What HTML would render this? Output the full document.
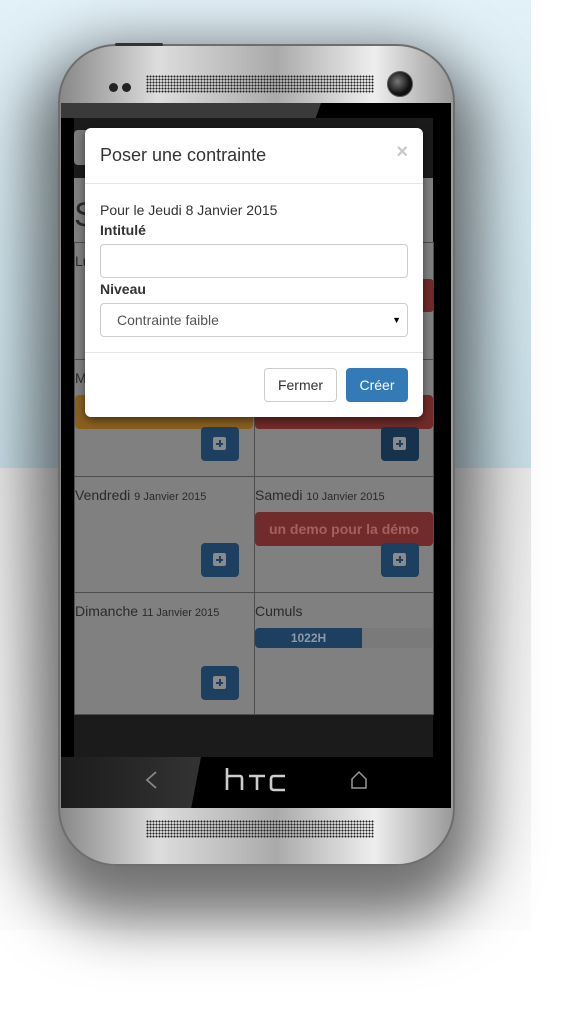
<!DOCTYPE html>
<html><head><meta charset="utf-8"><style>
*{box-sizing:border-box;margin:0;padding:0}
body{width:565px;height:1010px;background:#fff;position:relative;overflow:hidden;font-family:"Liberation Sans",sans-serif}
.a{position:absolute}
.bgtop{left:0;top:0;width:531px;height:468px;background:linear-gradient(180deg,#e2f0f7 0%,#d3e6ee 50%,#c8dfe8 100%)}
.bgbot{left:0;top:468px;width:531px;height:462px;background:linear-gradient(180deg,#e9e9e9,#f6f6f6 70%,#fcfcfc)}
.shadow{left:58px;top:44px;width:397px;height:822px;border-radius:60px;box-shadow:0 30px 60px 25px rgba(0,0,0,.55)}
.body{left:58px;top:44px;width:397px;height:822px;border-radius:58px;background:linear-gradient(90deg,#888,#ddd 25%,#aaa 55%,#eee 80%,#999);border:2px solid #6e6e6e}
.inner{left:61px;top:103px;width:390px;height:705px;background:#000}
.grille{background-image:radial-gradient(circle,#222 0.9px,transparent 1.1px);background-size:3px 3px}
.cell{position:absolute;background:#808080;border:1px solid #4e4e4e}
.t{font-size:14px;color:#2a2a2a;position:absolute;left:0;top:10px;white-space:nowrap}
.t small{font-size:11px}
.pb{position:absolute;width:38px;height:34px;background:#1d3f60;border-radius:4px}
.pb:after{content:"";position:absolute;left:12px;top:10px;width:13px;height:13px;border-radius:2px;
background:linear-gradient(#1d3f60,#1d3f60) center/7px 2px no-repeat,linear-gradient(#1d3f60,#1d3f60) center/2px 7px no-repeat,#8a8a8a}
.modal{left:85px;top:128px;width:338px;height:289px;background:#fff;border-radius:6px;box-shadow:0 3px 9px rgba(0,0,0,.5)}
.inp{position:absolute;left:15px;width:308px;height:34px;border:1px solid #ccc;border-radius:4px;background:#fff}
</style></head><body>
<div class="a bgtop"></div><div class="a bgbot"></div>
<div class="a shadow"></div>
<div class="a body"></div>
<div class="a" style="left:115px;top:43px;width:48px;height:3px;background:#333;border-radius:2px"></div>
<div class="a" style="left:109px;top:83px;width:9px;height:9px;border-radius:50%;background:#222"></div>
<div class="a" style="left:122px;top:83px;width:9px;height:9px;border-radius:50%;background:#222"></div>
<div class="a grille" style="left:146px;top:75px;width:228px;height:18px"></div>
<div class="a" style="left:387px;top:71px;width:26px;height:26px;border-radius:50%;background:radial-gradient(circle at 40% 40%,#777,#111 60%);border:1px solid #555"></div>
<div class="a grille" style="left:146px;top:820px;width:228px;height:18px"></div>
<div class="a inner"></div>
<div class="a" style="left:61px;top:103px;width:260px;height:15px;background:#3a3a3a;clip-path:polygon(0 0,100% 0,98% 100%,0 100%)"></div>
<div class="a" style="left:61px;top:757px;width:140px;height:51px;background:linear-gradient(90deg,#1c1c1c,#333);clip-path:polygon(0 0,100% 0,93% 100%,0 100%)"></div>
<svg class="a" style="left:140px;top:768px" width="24" height="24"><path d="M16 4 L7 12 L16 20" stroke="#888" stroke-width="1.8" fill="none"/></svg>
<svg class="a" style="left:222px;top:766px" width="68" height="28"><g stroke="#ccc" stroke-width="2.6" fill="none"><path d="M5 2 V24 M5 12 Q5 10 8 10 H18 Q20 10 20 13 V24"/><path d="M27 10 H43 M35 10 V24"/><path d="M63 10 H52 Q49 10 49 13 V21 Q49 24 52 24 H63"/></g></svg>
<svg class="a" style="left:349px;top:769px" width="20" height="22"><path d="M3 19 V10 L10 3 L17 10 V19 Z" stroke="#999" stroke-width="1.5" fill="none"/></svg>
<!-- screen -->
<div class="a" style="left:74px;top:118px;width:359px;height:639px;background:#1b1b1b"></div>
<div class="a" style="left:74px;top:130px;width:20px;height:35px;background:#7a7a7a;border-radius:4px"></div>
<div class="a" style="left:74px;top:178px;width:359px;height:536px;background:#808080"></div>
<div class="a" style="left:74px;top:195px;font-size:34px;color:#2a2a2a;line-height:40px">S</div>
<div class="cell" style="left:74px;top:242px;width:181px;height:118px"><div class="t">Lundi</div></div>
<div class="cell" style="left:254px;top:242px;width:180px;height:118px"></div>
<div class="a" style="left:254px;top:279px;width:180px;height:33px;background:#712b2a;border-radius:4px"></div>
<div class="cell" style="left:74px;top:359px;width:181px;height:118px"><div class="t">Mardi</div></div>
<div class="cell" style="left:254px;top:359px;width:180px;height:118px"></div>
<div class="a" style="left:75px;top:395px;width:178px;height:34px;background:#8a6020;border-radius:4px"></div>
<div class="a" style="left:255px;top:395px;width:178px;height:34px;background:#712b2a;border-radius:4px"></div>
<div class="pb" style="left:201px;top:427px"></div>
<div class="pb" style="left:381px;top:427px;background:#16324d"></div>
<div class="cell" style="left:74px;top:476px;width:181px;height:117px"><div class="t">Vendredi <small>9 Janvier 2015</small></div></div>
<div class="cell" style="left:254px;top:476px;width:180px;height:117px"><div class="t">Samedi <small>10 Janvier 2015</small></div></div>
<div class="a" style="left:255px;top:512px;width:178px;height:34px;background:#712b2a;border-radius:4px;color:#a66060;font-size:14px;font-weight:bold;text-align:center;line-height:34px">un demo pour la démo</div>
<div class="pb" style="left:201px;top:543px"></div>
<div class="pb" style="left:381px;top:543px"></div>
<div class="cell" style="left:74px;top:592px;width:181px;height:123px"><div class="t">Dimanche <small>11 Janvier 2015</small></div></div>
<div class="cell" style="left:254px;top:592px;width:180px;height:123px"><div class="t">Cumuls</div></div>
<div class="a" style="left:255px;top:628px;width:178px;height:20px;background:#7a7a7a;border-radius:4px;overflow:hidden"><div style="width:107px;height:20px;background:#1d3f60;color:#8a9aaa;font-size:12px;font-weight:bold;text-align:center;line-height:20px">1022H</div></div>
<div class="pb" style="left:201px;top:666px"></div>
<!-- modal -->
<div class="a modal">
 <div class="a" style="left:15px;top:17px;font-size:18px;color:#333">Poser une contrainte</div>
 <div class="a" style="right:15px;top:13px;font-size:20px;font-weight:bold;color:#c8c8c8">×</div>
 <div class="a" style="left:0;top:55px;width:100%;height:1px;background:#e5e5e5"></div>
 <div class="a" style="left:15px;top:74px;font-size:14px;color:#333">Pour le Jeudi 8 Janvier 2015</div>
 <div class="a" style="left:15px;top:94px;font-size:14px;font-weight:bold;color:#333">Intitulé</div>
 <div class="inp" style="top:116px"></div>
 <div class="a" style="left:15px;top:153px;font-size:14px;font-weight:bold;color:#333">Niveau</div>
 <div class="inp" style="top:175px"><span class="a" style="left:16px;top:8px;font-size:14px;color:#555">Contrainte faible</span><span class="a" style="right:6px;top:11px;font-size:9px;color:#000">▼</span></div>
 <div class="a" style="left:0;top:224px;width:100%;height:1px;background:#e5e5e5"></div>
 <div class="a" style="left:179px;top:240px;width:73px;height:34px;border:1px solid #ccc;border-radius:4px;font-size:14px;color:#333;text-align:center;line-height:32px">Fermer</div>
 <div class="a" style="left:261px;top:240px;width:62px;height:34px;background:#337ab7;border-radius:4px;font-size:14px;color:#fff;text-align:center;line-height:34px">Créer</div>
</div>
</body></html>
